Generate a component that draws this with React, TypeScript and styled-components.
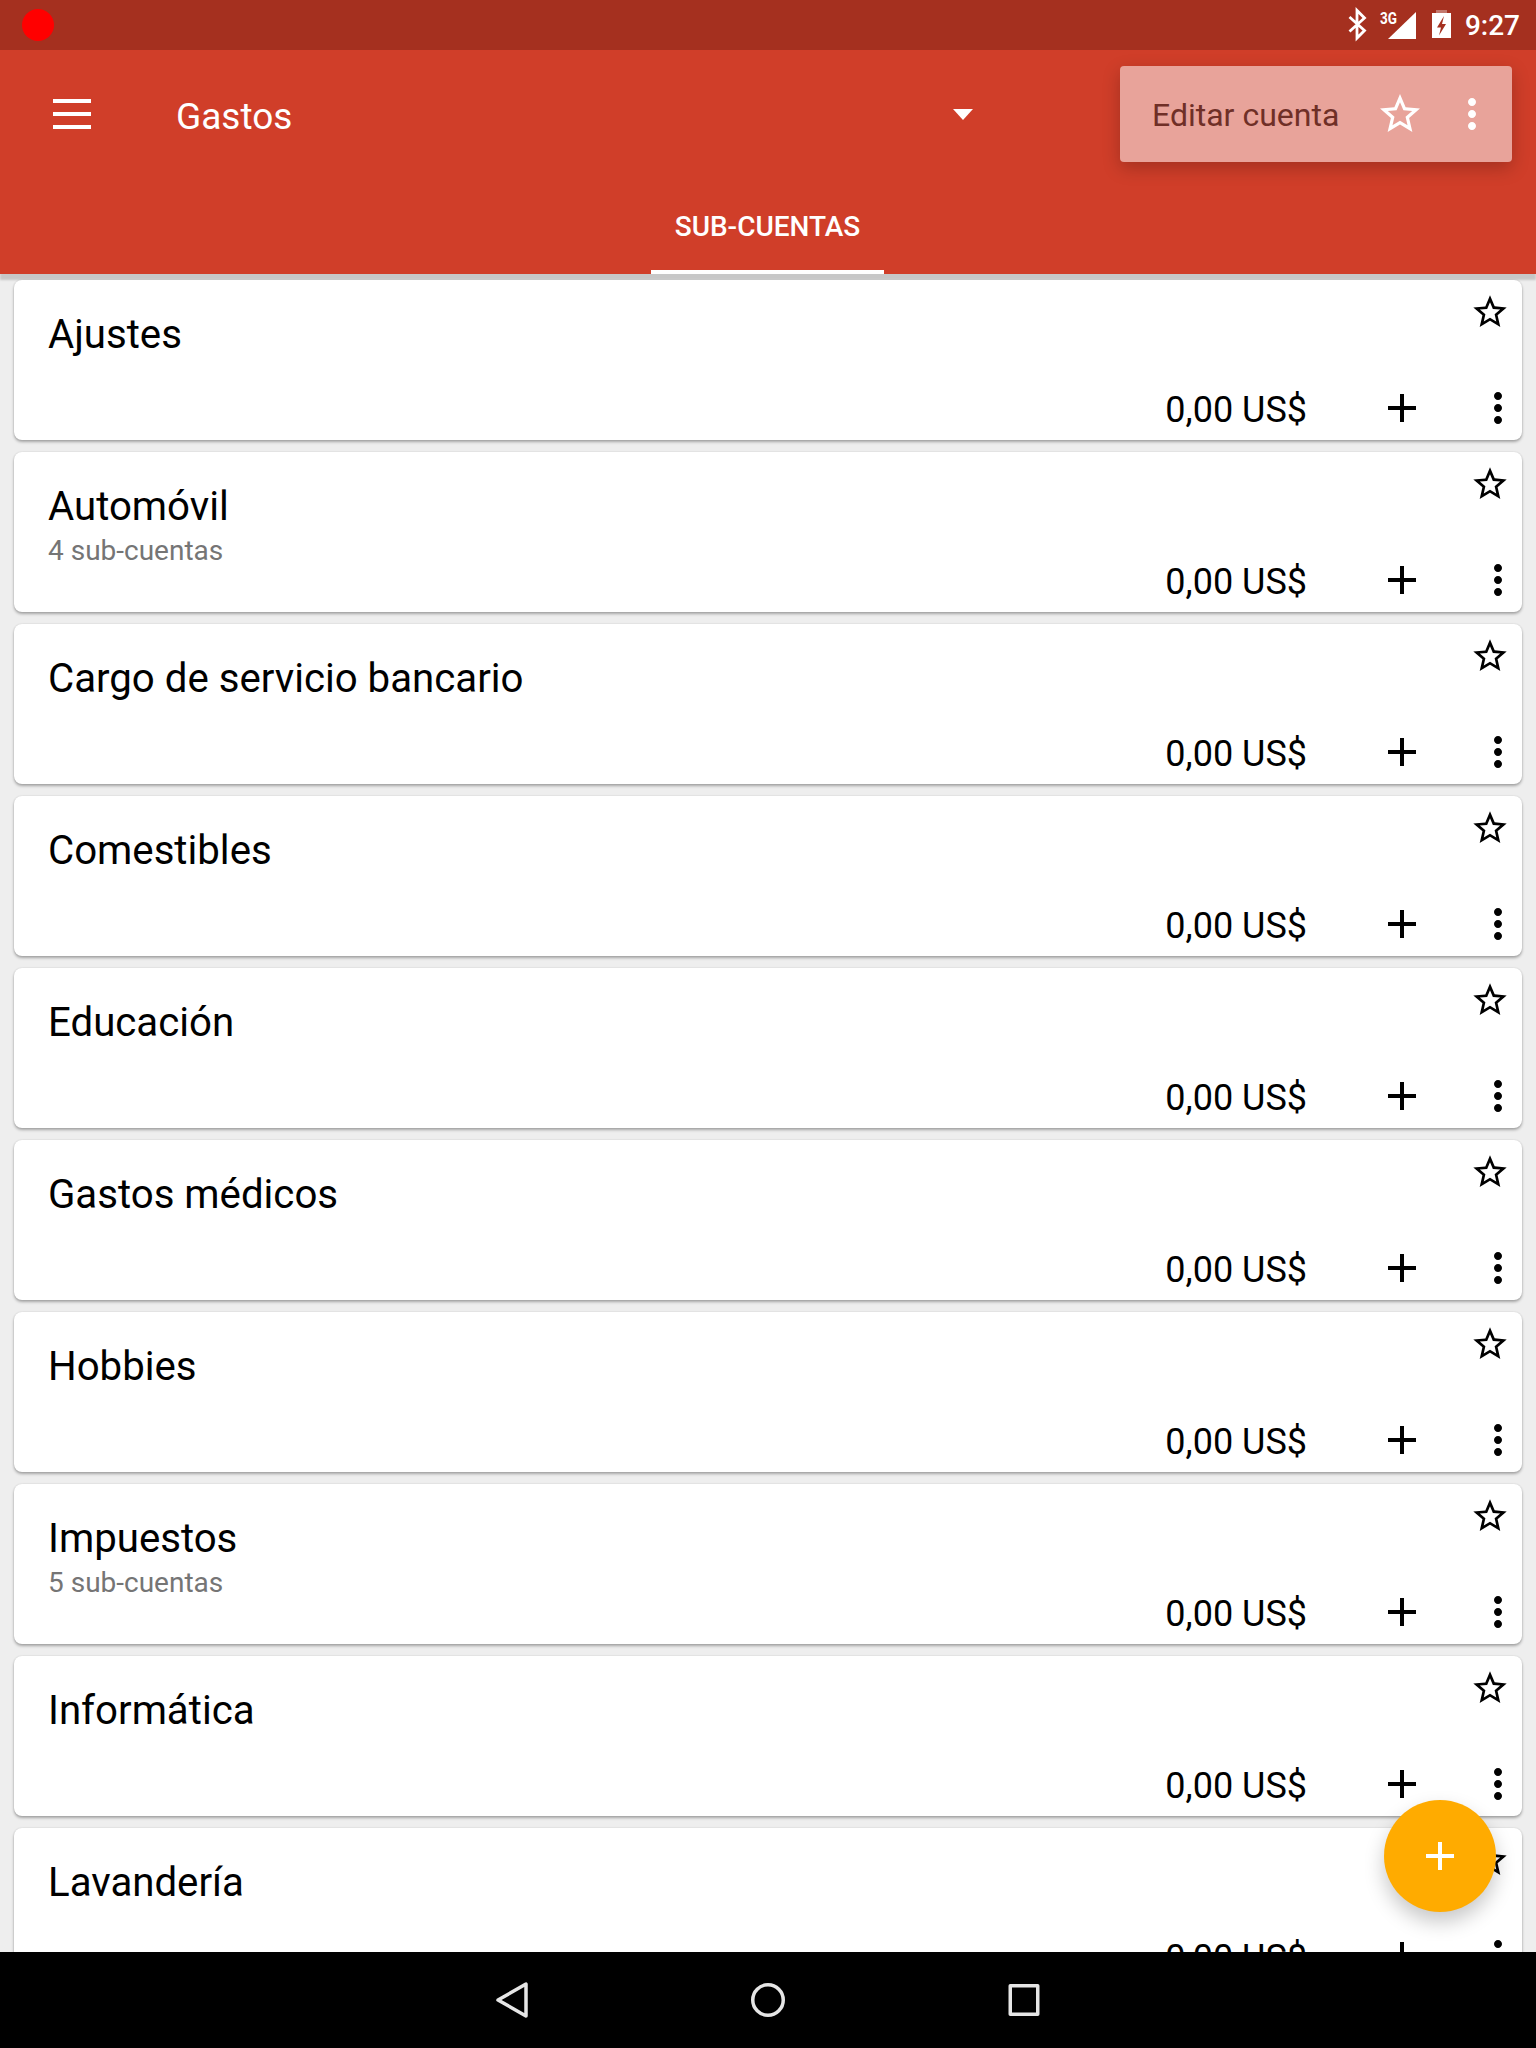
import React from 'react';
import styled, { createGlobalStyle } from 'styled-components';

const GlobalStyle = createGlobalStyle`
  html, body {
    margin: 0;
    padding: 0;
    background: #eeeeee;
    font-family: Roboto, "Liberation Sans", sans-serif;
  }
`;

const Screen = styled.div`
  position: relative;
  width: 1536px;
  height: 2048px;
  display: flex;
  flex-direction: column;
  overflow: hidden;
  background: #eeeeee;
`;

const StatusBar = styled.div`
  height: 50px;
  flex: none;
  background: #a5301f;
  display: flex;
  align-items: center;
  justify-content: space-between;
  padding: 0 16px 0 22px;
`;

const RecDot = styled.div`
  width: 32px;
  height: 32px;
  border-radius: 50%;
  background: #ff0000;
`;

const StatusIcons = styled.div`
  display: flex;
  align-items: center;
`;

const StatusSvg = styled.svg`
  display: block;
`;

const Clock = styled.span`
  margin-left: 9px;
  font-size: 28px;
  font-weight: 500;
  color: #ffffff;
`;

const Header = styled.header`
  flex: none;
  height: 224px;
  background: #d03e29;
  display: flex;
  flex-direction: column;
  box-shadow: 0 6px 2px rgba(0, 0, 0, 0.16);
`;

const Toolbar = styled.div`
  height: 128px;
  display: flex;
  align-items: center;
  padding-left: 53px;
`;

const Burger = styled.div`
  width: 38px;
  height: 30px;
  display: flex;
  flex-direction: column;
  justify-content: space-between;

  span {
    display: block;
    height: 4px;
    background: #ffffff;
  }
`;

const Spinner = styled.div`
  width: 797px;
  margin-left: 85px;
  display: flex;
  align-items: center;
  justify-content: space-between;
  font-size: 37px;
  color: #ffffff;
`;

const SpinnerLabel = styled.span`
  padding-top: 5px;
`;

const Caret = styled.div`
  width: 0;
  height: 0;
  border-left: 10px solid transparent;
  border-right: 10px solid transparent;
  border-top: 11px solid #ffffff;
`;

const Tabs = styled.div`
  height: 96px;
  display: flex;
  justify-content: center;
`;

const Tab = styled.div`
  width: 233px;
  margin-left: -1px;
  padding-top: 4px;
  box-sizing: border-box;
  display: flex;
  align-items: center;
  justify-content: center;
  border-bottom: 4px solid #ffffff;
  font-size: 28px;
  font-weight: 500;
  color: #ffffff;
`;

const ActionPopup = styled.div`
  position: absolute;
  z-index: 3;
  top: 66px;
  left: 1120px;
  width: 392px;
  height: 96px;
  border-radius: 4px;
  background: #e8a39a;
  box-shadow: 0 6px 18px rgba(0, 0, 0, 0.22);
  display: flex;
  align-items: center;
  padding-left: 32px;
  box-sizing: border-box;
`;

const ActionLabel = styled.span`
  font-size: 32px;
  padding-top: 2px;
  color: #6f2f27;
  width: 224px;
`;

const ActionIcons = styled.div`
  display: flex;
  gap: 24px;
`;

const List = styled.main`
  position: relative;
  z-index: 1;
  flex: 1;
  min-height: 0;
  overflow: hidden;
  display: flex;
  flex-direction: column;
  gap: 12px;
  padding: 6px 14px 0;
`;

const Card = styled.article`
  flex: none;
  height: 160px;
  border-radius: 8px;
  background: #ffffff;
  box-shadow: 0 2px 3px rgba(0, 0, 0, 0.3), 0 0 2px rgba(0, 0, 0, 0.12);
  display: flex;
  flex-direction: column;
`;

const CardTop = styled.div`
  flex: none;
  height: 104px;
  box-sizing: border-box;
  display: flex;
  align-items: flex-start;
  justify-content: space-between;
  padding: 12px 12px 0 34px;
`;

const CardTitle = styled.div`
  font-size: 40.2px;
  line-height: 48px;
  padding-top: 19px;
  color: #000000;
`;

const CardSubtitle = styled.div`
  font-size: 28px;
  line-height: 32px;
  margin-top: 4px;
  color: #757575;
`;

const CardBottom = styled.div`
  display: flex;
  align-items: center;
  justify-content: flex-end;
`;

const Amount = styled.span`
  font-size: 36px;
  padding-top: 4px;
  color: #000000;
  margin-right: 71px;
`;

const PlusIcon = styled.svg`
  display: block;
  margin-right: 48px;
`;

const Icon = styled.svg`
  display: block;
  flex: none;
`;

const Fab = styled.div`
  position: absolute;
  z-index: 3;
  left: 1384px;
  top: 1800px;
  width: 112px;
  height: 112px;
  border-radius: 50%;
  background: #ffab00;
  box-shadow: 0 10px 20px rgba(0, 0, 0, 0.22);
  display: flex;
  align-items: center;
  justify-content: center;
`;

const NavBar = styled.nav`
  position: relative;
  z-index: 2;
  flex: none;
  height: 96px;
  background: #000000;
  display: flex;
  align-items: center;
  justify-content: center;
  gap: 196px;
`;

const STAR = 'M22 9.24l-7.19-.62L12 2 9.19 8.63 2 9.24l5.46 4.73L5.82 21 12 17.27 18.18 21l-1.63-7.03L22 9.24zM12 15.4l-3.76 2.27 1-4.28-3.32-2.88 4.38-.38L12 6.1l1.71 4.04 4.38.38-3.32 2.88 1 4.28L12 15.4z';
const DOTS = 'M12 8c1.1 0 2-.9 2-2s-.9-2-2-2-2 .9-2 2 .9 2 2 2zm0 2c-1.1 0-2 .9-2 2s.9 2 2 2 2-.9 2-2-.9-2-2-2zm0 6c-1.1 0-2 .9-2 2s.9 2 2 2 2-.9 2-2-.9-2-2-2z';
const PLUS = 'M19 13h-6v6h-2v-6H5v-2h6V5h2v6h6v2z';

const Glyph: React.FC<{ d: string; size: number; color: string; className?: string }> = ({ d, size, color, className }) => (
  <Icon className={className} width={size} height={size} viewBox="0 0 24 24" fill={color}>
    <path d={d} />
  </Icon>
);

const accounts = [
  { name: 'Ajustes' },
  { name: 'Automóvil', sub: '4 sub-cuentas' },
  { name: 'Cargo de servicio bancario' },
  { name: 'Comestibles' },
  { name: 'Educación' },
  { name: 'Gastos médicos' },
  { name: 'Hobbies' },
  { name: 'Impuestos', sub: '5 sub-cuentas' },
  { name: 'Informática' },
  { name: 'Lavandería' },
];

const App: React.FC = () => (
  <Screen>
    <GlobalStyle />
    <StatusBar>
      <RecDot />
      <StatusIcons>
        {/* bluetooth, 3G + signal and battery share one drawing */}
        <StatusSvg width={112} height={36} viewBox="0 0 112 36" fill="none">
          <path d="M5.5 10l15 13.5-7.5 7.5V3.5l7.5 7.5L5.5 24.5" stroke="#ffffff" strokeWidth="2.8" />
          <text x="36" y="17" fontSize="16.5" fontWeight="700" fill="#ffffff" textLength="17" lengthAdjust="spacingAndGlyphs" fontFamily="Roboto, sans-serif">3G</text>
          <path d="M72 5v27H44z" fill="#ffffff" />
          <rect x="92" y="3" width="11" height="4" fill="#ffffff" opacity="0.35" />
          <path d="M88 6h19v25H88z" fill="#ffffff" />
          <path d="M100 9l-7 11.5h4l-2 8 7-11.5h-4z" fill="#a5301f" />
        </StatusSvg>
        <Clock>9:27</Clock>
      </StatusIcons>
    </StatusBar>
    <Header>
      <Toolbar>
        <Burger>
          <span />
          <span />
          <span />
        </Burger>
        <Spinner>
          <SpinnerLabel>Gastos</SpinnerLabel>
          <Caret />
        </Spinner>
      </Toolbar>
      <Tabs>
        <Tab>SUB-CUENTAS</Tab>
      </Tabs>
    </Header>
    <ActionPopup>
      <ActionLabel>Editar cuenta</ActionLabel>
      <ActionIcons>
        <Glyph d={STAR} size={48} color="#ffffff" />
        <Glyph d={DOTS} size={48} color="#ffffff" />
      </ActionIcons>
    </ActionPopup>
    <List>
      {accounts.map((account) => (
        <Card key={account.name}>
          <CardTop>
            <div>
              <CardTitle>{account.name}</CardTitle>
              {account.sub && <CardSubtitle>{account.sub}</CardSubtitle>}
            </div>
            <Glyph d={STAR} size={40} color="#000000" />
          </CardTop>
          <CardBottom>
            <Amount>0,00 US$</Amount>
            <PlusIcon width={48} height={48} viewBox="0 0 24 24" fill="#000000">
              <path d={PLUS} />
            </PlusIcon>
            <Glyph d={DOTS} size={48} color="#000000" />
          </CardBottom>
        </Card>
      ))}
    </List>
    <Fab>
      <Glyph d={PLUS} size={48} color="#ffffff" />
    </Fab>
    <NavBar>
      <Icon width={60} height={44} viewBox="0 0 60 44" fill="none" stroke="#e6e6e6" strokeWidth="3.5" strokeLinejoin="round">
        <path d="M44 6v32L16 22z" />
      </Icon>
      <Icon width={60} height={44} viewBox="0 0 60 44" fill="none" stroke="#e6e6e6" strokeWidth="3.5">
        <circle cx="30" cy="22" r="15.25" />
      </Icon>
      <Icon width={60} height={44} viewBox="0 0 60 44" fill="none" stroke="#e6e6e6" strokeWidth="3.5" strokeLinejoin="round">
        <rect x="16.25" y="7.75" width="27.5" height="28.5" />
      </Icon>
    </NavBar>
  </Screen>
);

export default App;
